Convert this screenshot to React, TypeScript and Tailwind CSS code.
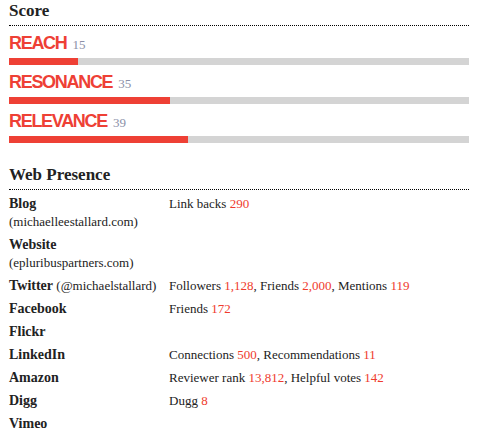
import React from "react";

const scores = [
  { label: "REACH", value: 15 },
  { label: "RESONANCE", value: 35 },
  { label: "RELEVANCE", value: 39 },
];

type Part = { t: string; n?: boolean };
const rows: { name: string; handle?: string; sub?: string; value?: Part[] }[] = [
  { name: "Blog", sub: "(michaelleestallard.com)", value: [{ t: "Link backs " }, { t: "290", n: true }] },
  { name: "Website", sub: "(epluribuspartners.com)" },
  {
    name: "Twitter",
    handle: " (@michaelstallard)",
    value: [
      { t: "Followers " },
      { t: "1,128", n: true },
      { t: ", Friends " },
      { t: "2,000", n: true },
      { t: ", Mentions " },
      { t: "119", n: true },
    ],
  },
  { name: "Facebook", value: [{ t: "Friends " }, { t: "172", n: true }] },
  { name: "Flickr" },
  {
    name: "LinkedIn",
    value: [{ t: "Connections " }, { t: "500", n: true }, { t: ", Recommendations " }, { t: "11", n: true }],
  },
  {
    name: "Amazon",
    value: [{ t: "Reviewer rank " }, { t: "13,812", n: true }, { t: ", Helpful votes " }, { t: "142", n: true }],
  },
  { name: "Digg", value: [{ t: "Dugg " }, { t: "8", n: true }] },
  { name: "Vimeo" },
];

function Heading({ children }: { children: React.ReactNode }) {
  return (
    <div className="h-[26px] border-b border-dotted border-black pt-[1px] text-[17px] font-bold leading-[20px] text-[#222]">
      {children}
    </div>
  );
}

export default function App() {
  return (
    <div className="w-[481px] bg-white pl-[9px] font-['Liberation_Serif',serif] text-[#222]">
      <div className="w-[460px]">
        <Heading>Score</Heading>
        <div className="pt-[7px]">
          {scores.map((s) => (
            <div key={s.label} className="pb-[7px]">
              <div className="flex h-[20px] items-baseline">
                <span className="font-['Liberation_Sans',sans-serif] text-[18px] font-bold leading-[20px] tracking-[-1.3px] text-[#ee4035]">
                  {s.label}
                </span>
                <span className="ml-[6px] text-[13px] leading-[20px] text-[#8b90a8]">{s.value}</span>
              </div>
              <div className="mt-[5px] h-[7px] w-full bg-[#d4d4d4]">
                <div className="h-full bg-[#ee4035]" style={{ width: `${s.value}%` }} />
              </div>
            </div>
          ))}
        </div>
        <div className="mt-[14px]">
          <Heading>Web Presence</Heading>
        </div>
        <div className="text-[13px] leading-[18px]">
          {rows.map((r) => (
            <div key={r.name} className="flex pt-[5px]">
              <div className="w-[160px] shrink-0">
                <div>
                  <span className="text-[14px] font-bold">{r.name}</span>
                  {r.handle && <span>{r.handle}</span>}
                </div>
                {r.sub && <div>{r.sub}</div>}
              </div>
              <div>
                {r.value?.map((p, i) => (
                  <span key={i} className={p.n ? "text-[#ef3b2d]" : ""}>
                    {p.t}
                  </span>
                ))}
              </div>
            </div>
          ))}
        </div>
      </div>
    </div>
  );
}
